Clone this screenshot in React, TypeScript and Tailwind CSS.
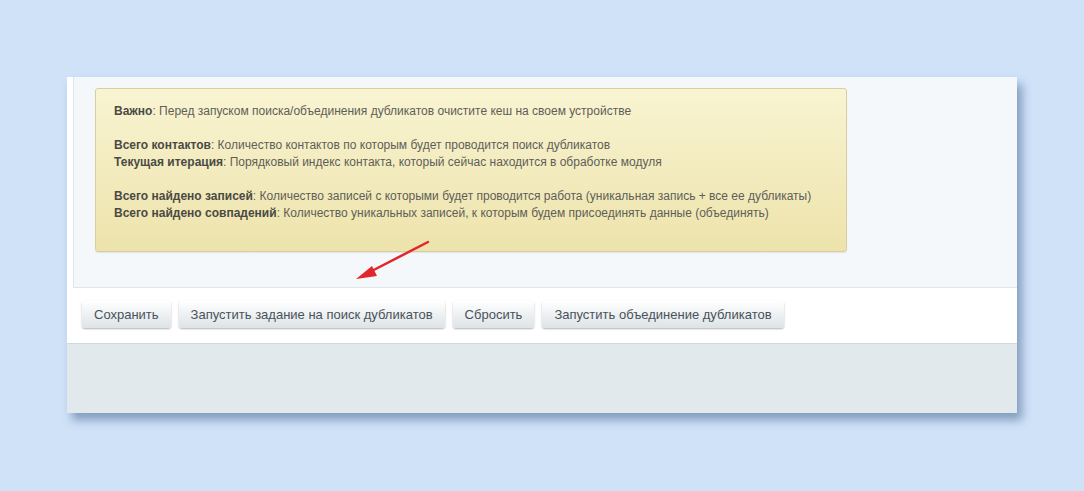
const buttons = [
  'Сохранить',
  'Запустить задание на поиск дубликатов',
  'Сбросить',
  'Запустить объединение дубликатов',
]

const notes = [
  [{ label: 'Важно', text: 'Перед запуском поиска/объединения дубликатов очистите кеш на своем устройстве' }],
  [
    { label: 'Всего контактов', text: 'Количество контактов по которым будет проводится поиск дубликатов' },
    { label: 'Текущая итерация', text: 'Порядковый индекс контакта, который сейчас находится в обработке модуля' },
  ],
  [
    { label: 'Всего найдено записей', text: 'Количество записей с которыми будет проводится работа (уникальная запись + все ее дубликаты)' },
    { label: 'Всего найдено совпадений', text: 'Количество уникальных записей, к которым будем присоединять данные (объединять)' },
  ],
]

export default function App() {
  return (
    <div className="w-[1084px] h-[491px] bg-[#cfe2f8] pt-[77px] pl-[67px] font-['Liberation_Sans',Arial,sans-serif] overflow-hidden">
      <div className="relative w-[950px] h-[336px] bg-white flex flex-col shadow-[5px_7px_9px_rgba(40,70,120,0.45)]">
        {/* Notes panel */}
        <div className="ml-[6px] h-[211px] bg-[#f5f8fa] border-l border-b border-[#dfe5e8] pl-[21px] pt-[11px]">
          <div className="w-[752px] h-[164px] rounded-[3px] border border-[#d8cf9d] bg-gradient-to-b from-[#f9f4d2] to-[#ede3ab] pl-[18px] pt-[14px] text-[12px] leading-[17px] text-[#5e5e58] shadow-[0_1px_1px_rgba(0,0,0,0.08)]">
            {notes.map((group, i) => (
              <div key={i} className={i > 0 ? 'mt-[17px]' : ''}>
                {group.map((n) => (
                  <div key={n.label}>
                    <span className="font-bold text-[#4a4a44]">{n.label}</span>: {n.text}
                  </div>
                ))}
              </div>
            ))}
          </div>
        </div>

        {/* Buttons */}
        <div className="h-[55px] bg-white flex items-center gap-[8px] pl-[15px] pb-[2px]">
          {buttons.map((b) => (
            <button
              key={b}
              className="h-[27px] px-[12px] rounded-[3px] bg-gradient-to-b from-[#ffffff] to-[#dde3e6] text-[13px] text-[#48525a] shadow-[0_1px_2px_rgba(0,0,0,0.3)]"
            >
              {b}
            </button>
          ))}
        </div>

        {/* Footer */}
        <div className="flex-1 bg-[#e2e9ec] border-t border-[#d3dade]" />

        {/* Red arrow annotation */}
        <svg className="absolute left-[285px] top-[160px]" width="80" height="48" viewBox="0 0 80 48">
          <line x1="76" y1="5" x2="12" y2="38" stroke="#e3262b" strokeWidth="2.5" strokeLinecap="round" />
          <polygon points="4,42 20,29 25,39" fill="#e3262b" />
        </svg>
      </div>
    </div>
  )
}
